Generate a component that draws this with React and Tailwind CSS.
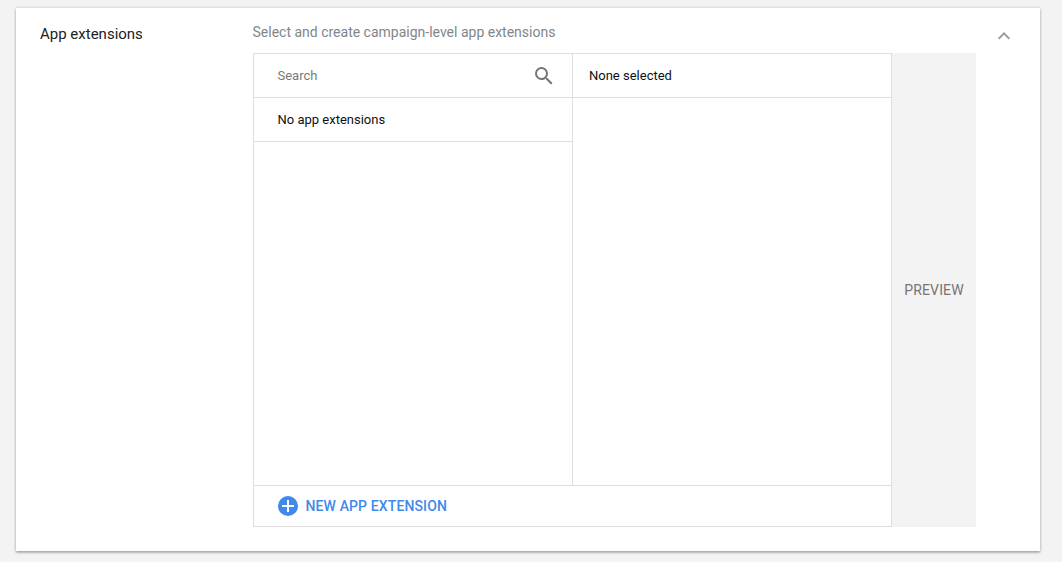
export default function App() {
  return (
    <div className="h-[562px] w-[1062px] overflow-hidden bg-[#f3f3f3] pl-4 pt-2 font-[Roboto,sans-serif] text-[13px] text-[#111111]">
      <section className="flex h-[543px] w-[1024px] bg-white shadow-[0_2px_2px_rgba(0,0,0,0.24),0_0_3px_rgba(0,0,0,0.2)]">
        <h2 className="w-[237px] shrink-0 pl-6 pt-4 text-[15px] leading-5 text-[#212121]">App extensions</h2>
        <div className="flex w-[723px] shrink-0 flex-col pt-[15px]">
          <p className="-ml-px h-[30px] pl-[0.5px] text-[14px] leading-[19px] text-[#80868b]">Select and create campaign-level app extensions</p>
          <div className="flex h-[474px]">
            <div className="flex w-[639px] flex-col border border-[#dedede]">
              <div className="flex flex-1">
                <div className="w-[319px] border-r border-[#dedede]">
                  <label className="flex h-11 items-center justify-between border-b border-[#dedede] pl-[23.5px] pr-4 text-[#7a7a7a]">
                    <span>Search</span>
                    <svg viewBox="0 0 24 24" className="size-6" fill="#757575"><path d="M15.5 14h-.79l-.28-.27A6.47 6.47 0 0 0 16 9.500A6.500 6.500 0 1 0 9.500 16c1.610 0 3.090-.59 4.230-1.570l.27.28v.79l5 4.990L20.490 19zm-6 0A4.500 4.500 0 1 1 14 9.500A4.500 4.500 0 0 1 9.500 14" /></svg>
                  </label>
                  <div className="flex h-11 items-center border-b border-[#dedede] pl-[23.5px]">No app extensions</div>
                </div>
                <div className="flex-1">
                  <div className="flex h-11 items-center border-b border-[#dedede] pl-4">None selected</div>
                </div>
              </div>
              <button className="flex h-[41px] shrink-0 items-center border-t border-[#dedede] pl-[22px] text-[14px] font-medium tracking-[0.12px] text-[#4189ea]">
                <svg viewBox="0 0 24 24" className="mr-[5.5px] size-6">
                  <circle cx="12" cy="12" r="10" fill="#4189ea" />
                  <path d="M6 12h12M12 6v12" fill="none" stroke="white" strokeWidth="2" />
                </svg>
                NEW APP EXTENSION
              </button>
            </div>
            <button className="flex w-[84px] items-center justify-center bg-[#f3f3f3] text-[14px] tracking-[0.16px] text-[#757575]">PREVIEW</button>
          </div>
        </div>
        <button className="ml-4 mt-4 size-6">
          <svg viewBox="0 0 24 24" className="size-6" fill="#939da4"><path d="m12 8l-6 6l1.410 1.410L12 10.830l4.590 4.580L18 14z" /></svg>
        </button>
      </section>
    </div>
  );
}
